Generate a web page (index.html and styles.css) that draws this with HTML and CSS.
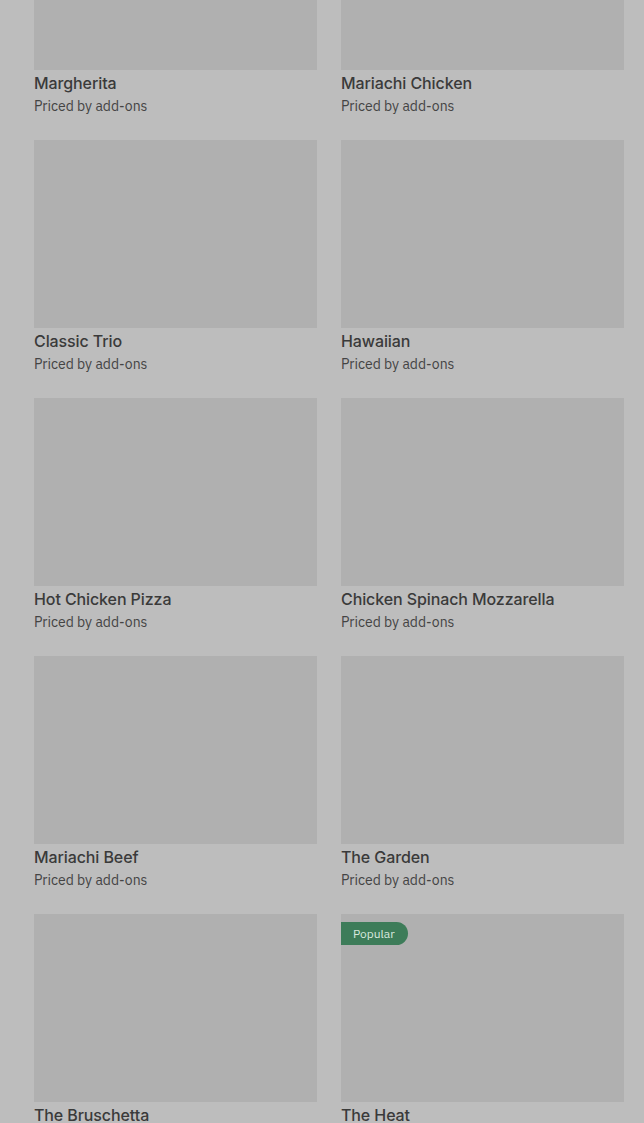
FILE: index.html
```html
<!DOCTYPE html>
<html lang="en">
<head>
  <meta charset="UTF-8">
  <title>Menu</title>
  <link rel="stylesheet" href="styles.css">
</head>
<body>
  <div class="menu-grid">
    <div class="item"><div class="thumb"></div><div class="item-name">Margherita</div><div class="item-price">Priced by add-ons</div></div>
    <div class="item"><div class="thumb"></div><div class="item-name">Mariachi Chicken</div><div class="item-price">Priced by add-ons</div></div>
    <div class="item"><div class="thumb"></div><div class="item-name">Classic Trio</div><div class="item-price">Priced by add-ons</div></div>
    <div class="item"><div class="thumb"></div><div class="item-name">Hawaiian</div><div class="item-price">Priced by add-ons</div></div>
    <div class="item"><div class="thumb"></div><div class="item-name">Hot Chicken Pizza</div><div class="item-price">Priced by add-ons</div></div>
    <div class="item"><div class="thumb"></div><div class="item-name">Chicken Spinach Mozzarella</div><div class="item-price">Priced by add-ons</div></div>
    <div class="item"><div class="thumb"></div><div class="item-name">Mariachi Beef</div><div class="item-price">Priced by add-ons</div></div>
    <div class="item"><div class="thumb"></div><div class="item-name">The Garden</div><div class="item-price">Priced by add-ons</div></div>
    <div class="item"><div class="thumb"></div><div class="item-name">The Bruschetta</div><div class="item-price">Priced by add-ons</div></div>
    <div class="item"><div class="thumb"><span class="badge">Popular</span></div><div class="item-name">The Heat</div><div class="item-price">Priced by add-ons</div></div>
  </div>
</body>
</html>
```

FILE: styles.css
```css
body {
  margin: 0;
  background-color: #bdbdbd;
  font-family: "IBM Plex Sans", Roboto, "Liberation Sans", sans-serif;
  color: #3a3a3a;
  overflow: hidden;
}
.menu-grid {
  display: grid;
  grid-template-columns: 283px 283px;
  column-gap: 24px;
  row-gap: 24px;
  padding: 0 20px 0 34px;
  margin-top: -118px;
}
.item {
  display: flex;
  flex-direction: column;
}
.thumb {
  position: relative;
  height: 188px;
  background-color: #b0b0b0;
}
.item-name {
  margin-top: 1px;
  font-family: Inter, Roboto, sans-serif;
  font-size: 16px;
  font-weight: 500;
  letter-spacing: -0.1px;
  line-height: 24px;
  color: #3a3a3a;
}
.item-price {
  padding-top: 1px;
  font-size: 14px;
  line-height: 20px;
  color: #444;
}
.badge {
  position: absolute;
  top: 8px;
  left: 0;
  padding: 0 13px 0 12px;
  height: 23px;
  line-height: 23px;
  font-size: 12px;
  color: #d8e8de;
  background-color: #3d7c59;
  border-radius: 0 12px 12px 0;
}
```
